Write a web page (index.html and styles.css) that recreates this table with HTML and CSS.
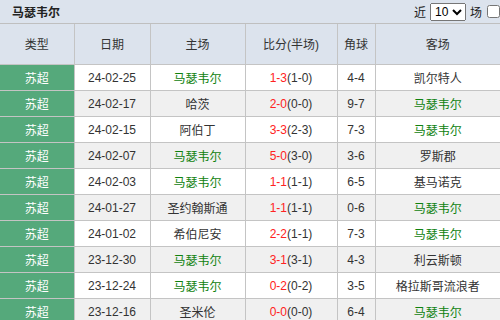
FILE: index.html
```html
<!DOCTYPE html>
<html>
<head>
<meta charset="utf-8">
<link rel="stylesheet" href="styles.css">
</head>
<body>
<div class="bar">
  <span class="title">马瑟韦尔</span>
  <span class="ctrl">近 <select class="sel"><option>10</option></select> 场 <input type="checkbox" class="chk"></span>
</div>
<table class="tbl">
  <colgroup>
    <col class="c1"><col class="c2"><col class="c3"><col class="c4"><col class="c5"><col class="c6">
  </colgroup>
  <thead>
    <tr><th>类型</th><th>日期</th><th>主场</th><th>比分(半场)</th><th>角球</th><th>客场</th></tr>
  </thead>
  <tbody>
    <tr><td class="lg">苏超</td><td>24-02-25</td><td class="gr">马瑟韦尔</td><td><span class="red">1-3</span>(1-0)</td><td>4-4</td><td>凯尔特人</td></tr>
    <tr><td class="lg">苏超</td><td>24-02-17</td><td>哈茨</td><td><span class="red">2-0</span>(0-0)</td><td>9-7</td><td class="gr">马瑟韦尔</td></tr>
    <tr><td class="lg">苏超</td><td>24-02-15</td><td>阿伯丁</td><td><span class="red">3-3</span>(2-3)</td><td>7-3</td><td class="gr">马瑟韦尔</td></tr>
    <tr><td class="lg">苏超</td><td>24-02-07</td><td class="gr">马瑟韦尔</td><td><span class="red">5-0</span>(3-0)</td><td>3-6</td><td>罗斯郡</td></tr>
    <tr><td class="lg">苏超</td><td>24-02-03</td><td class="gr">马瑟韦尔</td><td><span class="red">1-1</span>(1-1)</td><td>6-5</td><td>基马诺克</td></tr>
    <tr><td class="lg">苏超</td><td>24-01-27</td><td>圣约翰斯通</td><td><span class="red">1-1</span>(1-1)</td><td>0-6</td><td class="gr">马瑟韦尔</td></tr>
    <tr><td class="lg">苏超</td><td>24-01-02</td><td>希伯尼安</td><td><span class="red">2-2</span>(1-1)</td><td>7-3</td><td class="gr">马瑟韦尔</td></tr>
    <tr><td class="lg">苏超</td><td>23-12-30</td><td class="gr">马瑟韦尔</td><td><span class="red">3-1</span>(3-1)</td><td>4-3</td><td>利云斯顿</td></tr>
    <tr><td class="lg">苏超</td><td>23-12-24</td><td class="gr">马瑟韦尔</td><td><span class="red">0-2</span>(0-2)</td><td>3-5</td><td>格拉斯哥流浪者</td></tr>
    <tr><td class="lg">苏超</td><td>23-12-16</td><td>圣米伦</td><td><span class="red">0-0</span>(0-0)</td><td>6-4</td><td class="gr">马瑟韦尔</td></tr>
  </tbody>
</table>
</body>
</html>
```
FILE: styles.css
```css
html, body {
  margin: 0;
  padding: 0;
  background: #ffffff;
}
body {
  width: 500px;
  height: 320px;
  overflow: hidden;
  font-family: "Liberation Sans", "Noto Sans CJK SC", sans-serif;
  font-size: 12px;
  color: #333333;
}
.bar {
  height: 23px;
  background: #dce3ed;
  border-bottom: 1px solid #bfbfbf;
  display: flex;
  align-items: center;
  justify-content: space-between;
  padding: 0 0 0 12px;
}
.title {
  font-weight: bold;
  color: #222222;
}
.ctrl {
  display: flex;
  align-items: center;
  gap: 3px;
  color: #222222;
}
.sel {
  width: 36px;
  height: 18px;
  font-size: 12px;
  font-family: "Liberation Sans", sans-serif;
  margin: 0 1px;
  padding: 0;
}
.chk {
  width: 13px;
  height: 13px;
  margin: 0 0 0 2px;
}
.tbl {
  width: 500px;
  border-collapse: collapse;
  table-layout: fixed;
}
.c1 { width: 74px; }
.c2 { width: 76px; }
.c3 { width: 95px; }
.c4 { width: 92px; }
.c5 { width: 38px; }
.c6 { width: 125px; }
.tbl th {
  height: 38px;
  padding: 0 0 2px;
  background: #dce3ed;
  font-weight: normal;
  color: #333333;
  border-right: 1px solid #c4c4c4;
  border-bottom: 1px solid #c4c4c4;
}
.tbl td {
  height: 25px;
  padding: 0;
  text-align: center;
  border-right: 1px solid #c4c4c4;
  border-bottom: 1px solid #c4c4c4;
  white-space: nowrap;
}
.tbl th:last-child, .tbl td:last-child {
  border-right: none;
}
.tbl tbody tr:nth-child(even) td {
  background: #f0f0f0;
}
.tbl tbody tr td.lg {
  background: #55a97b;
  color: #ffffff;
}
.gr {
  color: #0f820f;
}
.red {
  color: #ff2222;
}
```
